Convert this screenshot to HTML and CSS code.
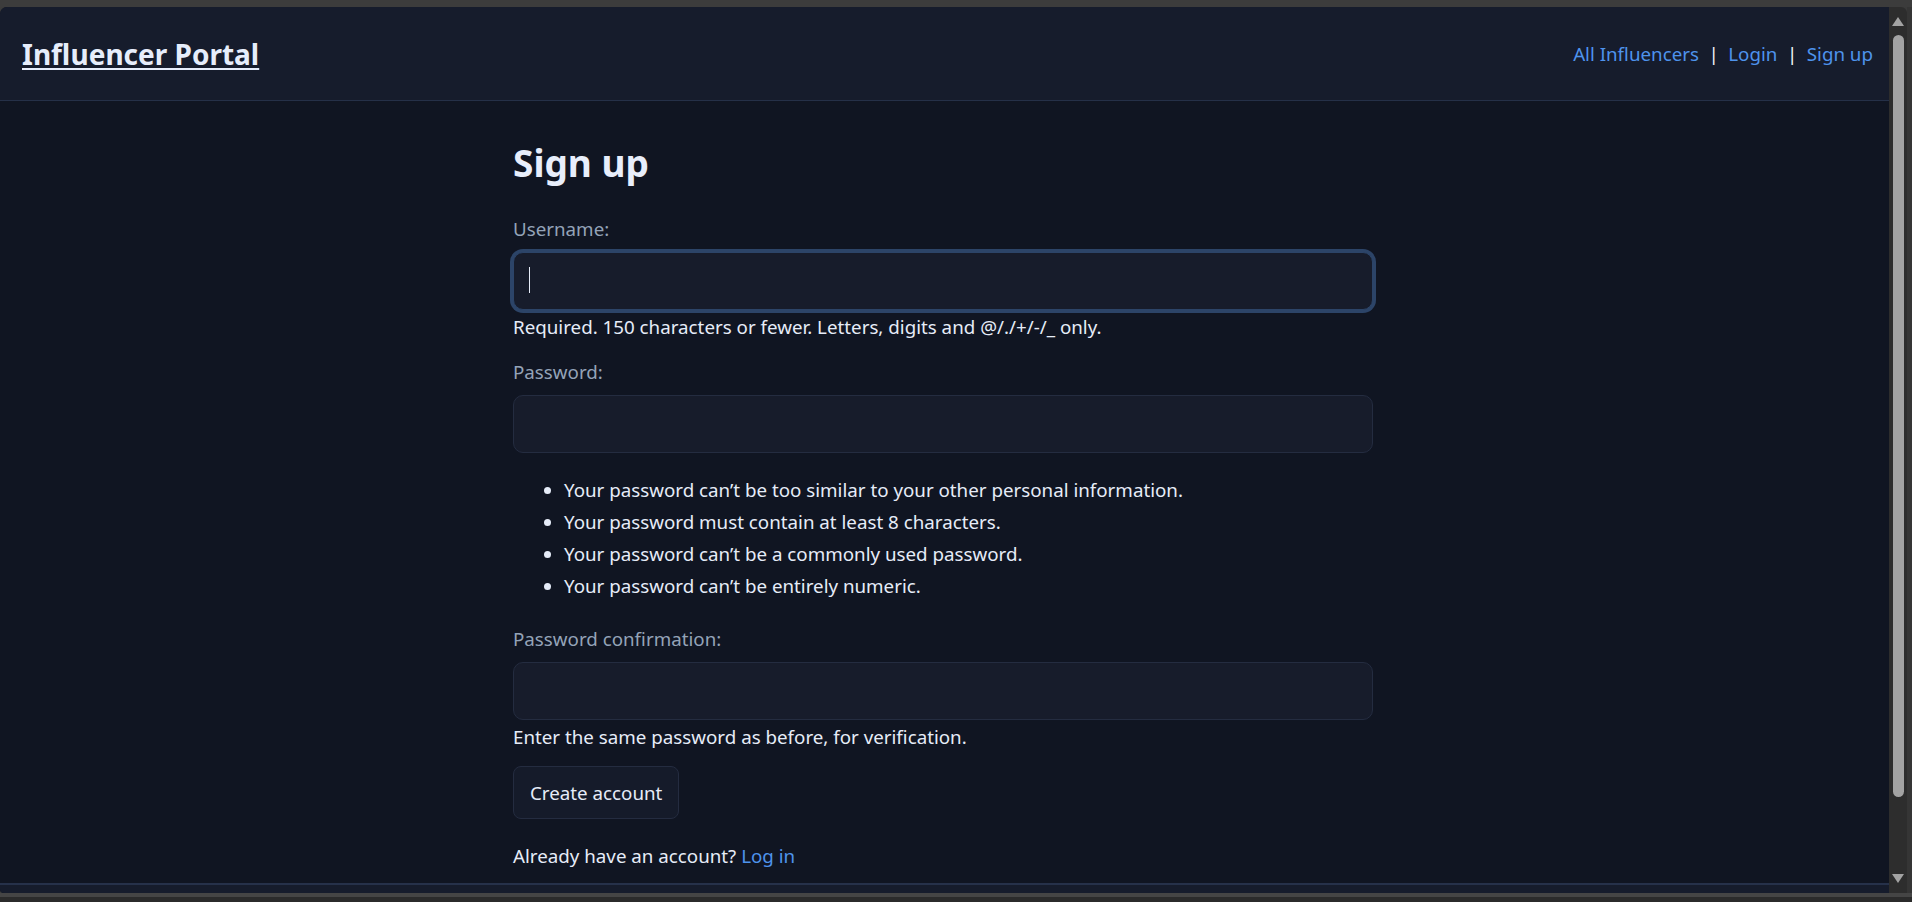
FILE: index.html
```html
<!DOCTYPE html>
<html lang="en">
<head>
<meta charset="utf-8">
<title>Sign up · Influencer Portal</title>
<link rel="stylesheet" href="styles.css">
</head>
<body>
<div class="window">
  <div class="window-top"></div>
  <div class="window-mid">
    <div class="viewport">
      <header class="site-header">
        <a class="brand" href="#">Influencer Portal</a>
        <nav class="nav">
          <a class="nav-link" href="#">All Influencers</a><span class="sep">|</span><a class="nav-link" href="#">Login</a><span class="sep">|</span><a class="nav-link" href="#">Sign up</a>
        </nav>
      </header>
      <main class="main">
        <div class="container">
          <h1 class="title">Sign up</h1>
          <form class="form" action="#">
            <label class="label label-first" for="id_username">Username:</label>
            <div class="field">
              <input class="input input-focus" id="id_username" type="text" name="username">
              <span class="caret"></span>
            </div>
            <div class="help">Required. 150 characters or fewer. Letters, digits and @/./+/-/_ only.</div>

            <label class="label label-after-help" for="id_password1">Password:</label>
            <div class="field">
              <input class="input" id="id_password1" type="password" name="password1">
            </div>
            <ul class="rules">
              <li>Your password can’t be too similar to your other personal information.</li>
              <li>Your password must contain at least 8 characters.</li>
              <li>Your password can’t be a commonly used password.</li>
              <li>Your password can’t be entirely numeric.</li>
            </ul>

            <label class="label label-after-list" for="id_password2">Password confirmation:</label>
            <div class="field">
              <input class="input" id="id_password2" type="password" name="password2">
            </div>
            <div class="help">Enter the same password as before, for verification.</div>

            <button class="btn" type="button">Create account</button>
          </form>
          <p class="alt">Already have an account? <a class="link" href="#">Log in</a></p>
        </div>
      </main>
      <footer class="site-footer"></footer>
    </div>
    <div class="scrollbar">
      <div class="scroll-track">
        <span class="arrow arrow-up"></span>
        <span class="thumb"></span>
        <span class="arrow arrow-down"></span>
      </div>
      <div class="scroll-edge"></div>
    </div>
  </div>
  <div class="window-bottom"></div>
</div>
</body>
</html>
```

FILE: styles.css
```css
* { box-sizing: border-box; }

html, body {
  margin: 0;
  padding: 0;
  width: 1912px;
  height: 902px;
  overflow: hidden;
  background: #3a3a3a;
  font-family: "Noto Sans", "Open Sans", sans-serif;
  font-size: 18.75px;
  color: #e6ecf8;
}

.window {
  display: flex;
  flex-direction: column;
  width: 1912px;
  height: 902px;
  background: #3b3b3b;
}

.window-top {
  height: 7px;
  background: #3c3c3c;
  flex: none;
}

.window-mid {
  display: flex;
  height: 886px;
  flex: none;
}

.viewport {
  width: 1889px;
  flex: none;
  display: flex;
  flex-direction: column;
  background: #101522;
  border-top-left-radius: 7px;
  border-bottom-left-radius: 4px;
  overflow: hidden;
}

.site-header {
  height: 94px;
  flex: none;
  display: flex;
  align-items: center;
  justify-content: space-between;
  padding: 0 16px 0 22px;
  background: #161c2c;
  border-bottom: 1px solid #253048;
}

.brand {
  font-size: 28px;
  font-weight: 700;
  color: #e6edfb;
  text-decoration: underline;
  text-decoration-thickness: 2px;
  text-underline-offset: 3px;
  line-height: 40px;
}

.nav {
  display: flex;
  align-items: center;
  line-height: 30px;
}

.nav-link {
  color: #4e93ec;
  text-decoration: none;
}

.sep {
  color: #f2f4f8;
  margin: 0 9.5px;
}

.main {
  flex: 1;
  display: flex;
  justify-content: center;
  padding: 38px 3px 0 0;
}

.container {
  width: 860px;
}

.title {
  margin: 0;
  font-size: 37px;
  font-weight: 700;
  line-height: 48px;
  color: #e8eefb;
}

.form {
  display: flex;
  flex-direction: column;
  align-items: flex-start;
  margin: 0;
}

.label {
  display: block;
  line-height: 30px;
  color: #94a3b8;
  margin-bottom: 8px;
}

.label-first { margin-top: 27px; }
.label-after-help { margin-top: 15px; }
.label-after-list { margin-top: 22px; }

.field {
  position: relative;
  width: 100%;
}

.input {
  display: block;
  width: 100%;
  height: 58px;
  margin: 0;
  padding: 0 16px;
  background: #171c2b;
  border: 1px solid #242c40;
  border-radius: 10px;
  color: #e6ecf8;
  font: inherit;
  outline: none;
  caret-color: transparent;
}

.input-focus {
  border-color: #2c4468;
  box-shadow: 0 0 0 3px #2c4468;
}

.caret {
  position: absolute;
  left: 16px;
  top: 15px;
  width: 1px;
  height: 26px;
  background: #e6ecf8;
}

.help {
  padding-top: 2px;
  line-height: 30px;
  color: #e6ecf8;
}

.rules {
  margin: 21px 0 0;
  padding: 0 0 0 51px;
  line-height: 32px;
  color: #e6ecf8;
}

.btn {
  margin-top: 14px;
  height: 53px;
  padding: 0 16px;
  background: #151b2a;
  border: 1px solid #242c40;
  border-radius: 8px;
  color: #e6ecf8;
  font: inherit;
  line-height: 30px;
}

.alt {
  margin: 22px 0 0;
  line-height: 30px;
  color: #e6ecf8;
}

.link {
  color: #4e93ec;
  text-decoration: none;
}

.site-footer {
  height: 10px;
  flex: none;
  background: #161c2c;
  border-top: 2px solid #26314a;
}

.scrollbar {
  width: 23px;
  flex: none;
  display: flex;
}

.scroll-track {
  position: relative;
  width: 18px;
  background: #2d2d2d;
  border-top-right-radius: 6px;
}

.scroll-edge {
  width: 5px;
  background: #353535;
}

.arrow {
  position: absolute;
  left: 3px;
  width: 0;
  height: 0;
  border-left: 6.5px solid transparent;
  border-right: 6.5px solid transparent;
}

.arrow-up {
  top: 10px;
  border-bottom: 9px solid #a3a3a3;
}

.arrow-down {
  bottom: 10px;
  border-top: 9px solid #a3a3a3;
}

.thumb {
  position: absolute;
  left: 4px;
  top: 28px;
  width: 11px;
  height: 762px;
  border-radius: 6px;
  background: #a3a3a3;
}

.window-bottom {
  height: 9px;
  flex: none;
  background: linear-gradient(#454545 0, #454545 45%, #2b2b2b 45%, #2b2b2b 100%);
}
```
